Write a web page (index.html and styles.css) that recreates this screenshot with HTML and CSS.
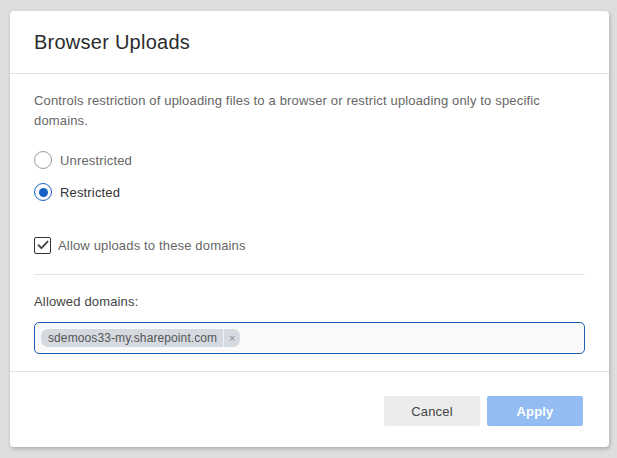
FILE: index.html
```html
<!DOCTYPE html>
<html>
<head>
<meta charset="utf-8">
<link rel="stylesheet" href="styles.css">
</head>
<body>
<div class="backdrop">
  <div class="modal">
    <div class="modal-header">
      <h1 class="title">Browser Uploads</h1>
    </div>
    <div class="modal-body">
      <p class="desc">Controls restriction of uploading files to a browser or restrict uploading only to specific domains.</p>
      <div class="radios">
        <label class="radio-row">
          <span class="radio"></span>
          <span class="radio-label">Unrestricted</span>
        </label>
        <label class="radio-row">
          <span class="radio checked"><span class="dot"></span></span>
          <span class="radio-label active">Restricted</span>
        </label>
      </div>
      <label class="check-row">
        <span class="checkbox">
          <svg width="12" height="10" viewBox="0 0 12 10"><path d="M1.5 5.2 L4.4 8.2 L10.6 1.6" fill="none" stroke="#444" stroke-width="1.9" stroke-linecap="round" stroke-linejoin="round"/></svg>
        </span>
        <span class="check-label">Allow uploads to these domains</span>
      </label>
      <div class="divider"></div>
      <div class="field-label">Allowed domains:</div>
      <div class="tag-input">
        <span class="tag"><span class="tag-text">sdemoos33-my.sharepoint.com</span><span class="tag-x">×</span></span>
      </div>
    </div>
    <div class="modal-footer">
      <button class="btn btn-cancel">Cancel</button>
      <button class="btn btn-apply">Apply</button>
    </div>
  </div>
</div>
</body>
</html>
```

FILE: styles.css
```css
html, body {
  margin: 0;
  padding: 0;
}
body {
  background: #dedede;
  font-family: "Liberation Sans", Arial, sans-serif;
  width: 617px;
  height: 458px;
  overflow: hidden;
}
.backdrop {
  padding: 11px 0 0 10px;
}
.modal {
  width: 599px;
  height: 436px;
  background: #fff;
  border-radius: 4px;
  box-shadow: 1px 2px 4px rgba(0,0,0,0.22);
  display: flex;
  flex-direction: column;
  box-sizing: border-box;
}
.modal-header {
  height: 62px;
  display: flex;
  align-items: center;
  padding-left: 24px;
  border-bottom: 1px solid #e2e2e2;
}
.title {
  margin: 0;
  font-size: 20px;
  font-weight: normal;
  color: #2b2b2b;
  line-height: 24px;
  letter-spacing: 0.25px;
}
.modal-body {
  padding: 17px 24px 17px 24px;
  border-bottom: 1px solid #e2e2e2;
  letter-spacing: 0.16px;
}
.desc {
  margin: 0;
  font-size: 13px;
  line-height: 20px;
  color: #666;
}
.radios {
  margin-top: 20px;
  display: flex;
  flex-direction: column;
  gap: 14px;
}
.radio-row, .check-row {
  display: flex;
  align-items: center;
  height: 18px;
}
.radio {
  width: 18px;
  height: 18px;
  box-sizing: border-box;
  border: 1px solid #9a9a9a;
  border-radius: 50%;
  display: flex;
  align-items: center;
  justify-content: center;
}
.radio.checked {
  border-color: #1761c4;
}
.dot {
  width: 9px;
  height: 9px;
  border-radius: 50%;
  background: #1761c4;
}
.radio-label {
  margin-left: 8px;
  font-size: 13px;
  color: #666;
}
.radio-label.active {
  color: #333;
}
.check-row {
  margin-top: 35px;
}
.checkbox {
  width: 17px;
  height: 17px;
  box-sizing: border-box;
  border: 1px solid #333;
  border-radius: 2px;
  display: flex;
  align-items: center;
  justify-content: center;
}
.check-label {
  margin-left: 7px;
  font-size: 13px;
  color: #666;
}
.divider {
  margin-top: 20px;
  height: 1px;
  background: #e2e2e2;
}
.field-label {
  margin-top: 19px;
  font-size: 13px;
  line-height: 16px;
  color: #444;
}
.tag-input {
  margin-top: 12px;
  height: 32px;
  box-sizing: border-box;
  border: 1px solid #1a5fb8;
  border-radius: 5px;
  background: #fafafa;
  display: flex;
  align-items: center;
  padding-left: 6px;
}
.tag {
  display: flex;
  align-items: center;
  height: 18px;
  background: #d5dae1;
  border-radius: 7px;
  font-size: 12px;
  color: #555;
  letter-spacing: 0.1px;
}
.tag-text {
  padding: 0 6px 0 7px;
  line-height: 18px;
}
.tag-x {
  border-left: 1px solid #eef0f3;
  width: 16px;
  text-align: center;
  font-size: 11px;
  color: #888;
  line-height: 18px;
}
.modal-footer {
  flex: 1;
  display: flex;
  justify-content: flex-end;
  align-items: flex-start;
  padding: 24px 26px 0 0;
  gap: 7px;
}
.btn {
  width: 96px;
  height: 30px;
  border: none;
  border-radius: 2px;
  font-family: "Liberation Sans", Arial, sans-serif;
  font-size: 13px;
  padding: 0;
  letter-spacing: 0.15px;
}
.btn-cancel {
  background: #ececec;
  color: #444;
}
.btn-apply {
  background: #92bcf2;
  color: #fff;
  font-weight: bold;
}
```
